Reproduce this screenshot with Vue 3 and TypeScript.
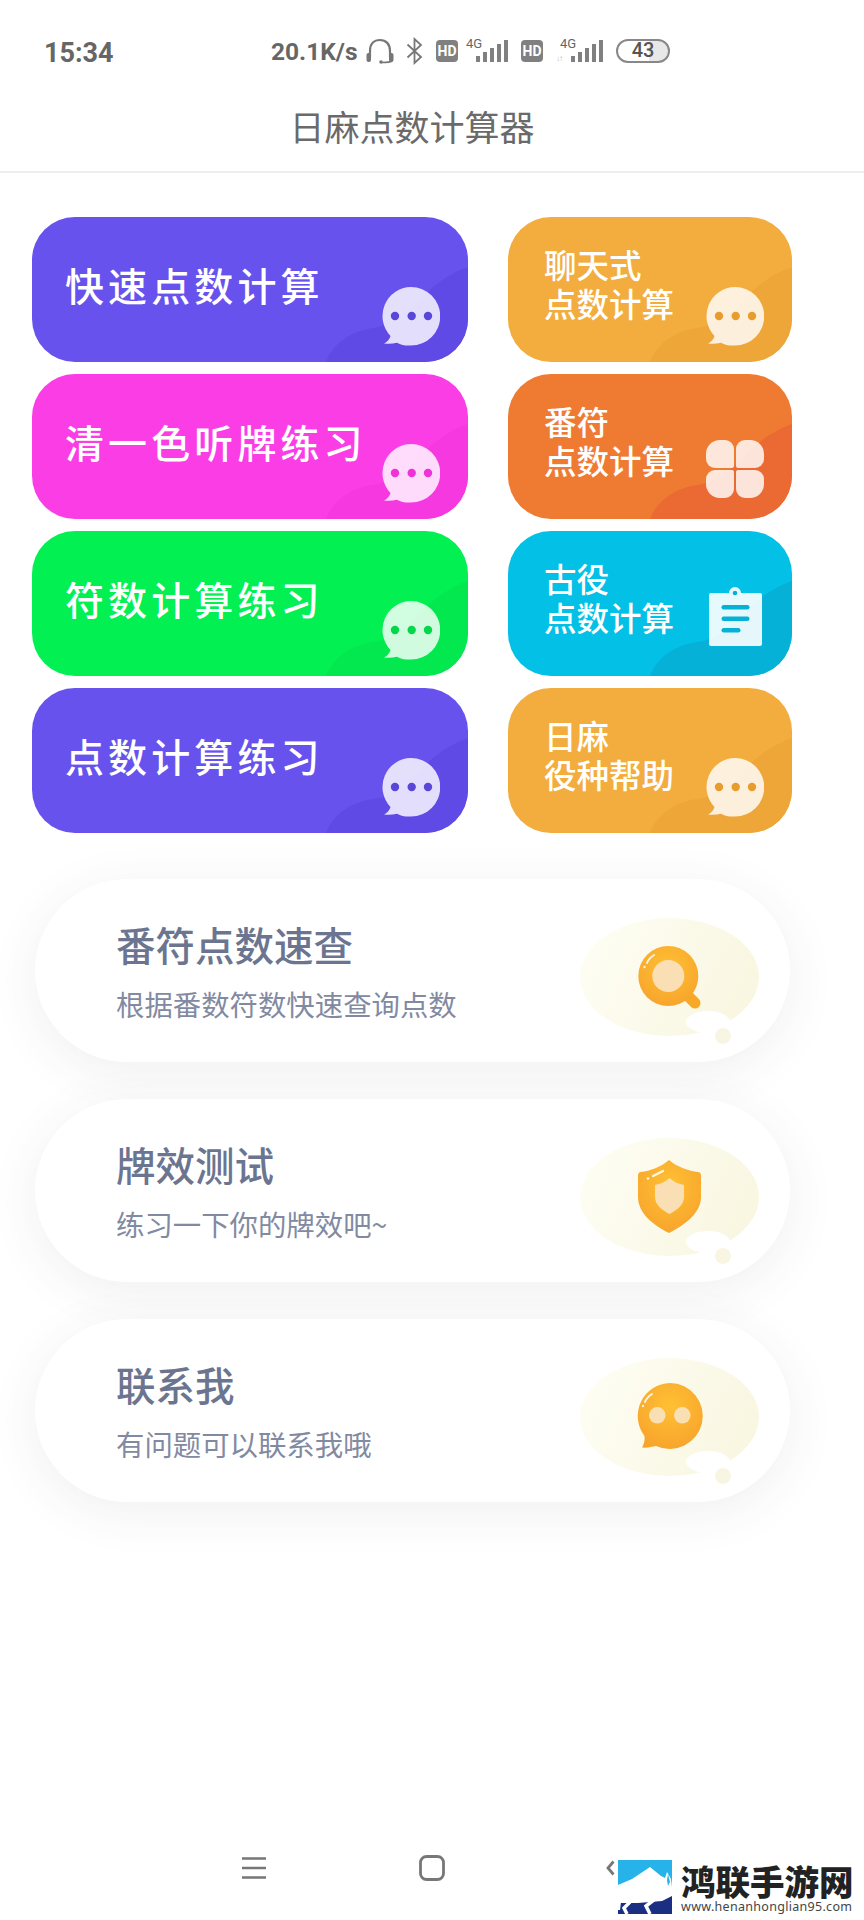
<script setup lang="ts">
type Icon = 'bubble' | 'clover' | 'clip'
interface Tile { lines: string[]; tone: string; icon: Icon }
interface Row { tile: Tile; side: Tile }
const rows: Row[] = [
  { tile: { lines: ['快速点数计算'], tone: 'purple', icon: 'bubble' }, side: { lines: ['聊天式', '点数计算'], tone: 'amber', icon: 'bubble' } },
  { tile: { lines: ['清一色听牌练习'], tone: 'magenta', icon: 'bubble' }, side: { lines: ['番符', '点数计算'], tone: 'orange', icon: 'clover' } },
  { tile: { lines: ['符数计算练习'], tone: 'green', icon: 'bubble' }, side: { lines: ['古役', '点数计算'], tone: 'cyan', icon: 'clip' } },
  { tile: { lines: ['点数计算练习'], tone: 'purple', icon: 'bubble' }, side: { lines: ['日麻', '役种帮助'], tone: 'amber', icon: 'bubble' } },
]
const tiles: Tile[] = rows.flatMap((r) => [r.tile, r.side])
const cards = [
  { title: '番符点数速查', sub: '根据番数符数快速查询点数', art: 'search' },
  { title: '牌效测试', sub: '练习一下你的牌效吧~', art: 'shield' },
  { title: '联系我', sub: '有问题可以联系我哦', art: 'chat' },
]
const barHeights = [6, 10, 14, 18, 22]
const petal = 'M14 0H19a9 9 0 0 1 9 9V26a2 2 0 0 1-2 2H9a9 9 0 0 1-9-9V14A14 14 0 0 1 14 0Z'
</script>

<template>
  <div class="page">
    <div class="status">
      <span class="time">15:34</span>
      <div class="status-right">
        <span class="speed">20.1K/s</span>
        <svg class="ic-head" width="28" height="26" viewBox="0 0 28 26" fill="none">
          <path d="M4 19V13C4 6 8 2 14 2s10 4 10 11v6" stroke="#777" stroke-width="2.2" />
          <rect x="0.5" y="15" width="4.5" height="9" rx="2" fill="#777" />
          <rect x="23" y="15" width="4.5" height="9" rx="2" fill="#777" />
          <path d="M26 23c-2 1.500-6 1.500-10 1.500" stroke="#777" stroke-width="1.600" />
          <circle cx="15" cy="24" r="1.800" fill="#777" />
        </svg>
        <svg class="ic-bt" width="17" height="28" viewBox="0 0 17 28" fill="none">
          <path d="M1.500 7.500L15 20 8.500 26V2l6.500 6L1.500 20.500" stroke="#777" stroke-width="1.800" />
        </svg>
        <span class="hd">HD</span>
        <div class="net">
          <span class="net-tag">4G</span>
          <div class="bars">
            <i v-for="h in barHeights" :key="h" class="bar" :style="{ height: h + 'px' }"></i>
          </div>
        </div>
        <span class="hd">HD</span>
        <div class="net net-2">
          <span class="net-tag">4G</span>
          <span class="arrows">↓↑</span>
          <div class="bars">
            <i v-for="h in barHeights" :key="h" class="bar" :style="{ height: h + 'px' }"></i>
          </div>
        </div>
        <div class="battery"><span class="level">43</span></div>
      </div>
    </div>

    <header class="head">日麻点数计算器</header>

    <section class="tiles">
      <div
        v-for="(t, i) in tiles"
        :key="i"
        class="tile"
        :class="[t.tone, i % 2 === 0 ? 'wide' : 'narrow']"
      >
        <svg class="wave" width="142" height="145" viewBox="0 0 142 145">
          <path d="M0 145C6 128 24 114 47 111C78 107 92 82 107 70C118 61 130 54 142 50V145Z" />
        </svg>
        <div class="label">
          <span v-for="l in t.lines" :key="l" class="line">{{ l }}</span>
        </div>
        <svg v-if="t.icon === 'bubble'" class="glyph" width="58" height="59" viewBox="0 0 58 59">
          <path class="glyph-fill" d="M29 0a29 29 0 0 1 0 58.500c-5 .3-10-.3-14-2.800-4 1-8 1.300-13 .8 3-1.500 5.500-4 6.500-7.500A29 29 0 0 1 29 0Z" />
          <circle class="glyph-dot" cx="13" cy="29" r="4.200" />
          <circle class="glyph-dot" cx="29.700" cy="29" r="4.200" />
          <circle class="glyph-dot" cx="46" cy="29" r="4.200" />
        </svg>
        <svg v-else-if="t.icon === 'clover'" class="glyph glyph-clover" width="58" height="58" viewBox="0 0 58 58">
          <path class="glyph-fill" :d="petal" />
          <path class="glyph-fill" transform="translate(58 0) scale(-1 1)" :d="petal" />
          <path class="glyph-fill" transform="translate(0 58) scale(1 -1)" :d="petal" />
          <path class="glyph-fill" transform="translate(58 58) scale(-1 -1)" :d="petal" />
        </svg>
        <svg v-else class="glyph glyph-clip" width="58" height="59" viewBox="0 0 58 59">
          <path class="glyph-solid" d="M5 6h18a6 6 0 0 1 12 0H54a2 2 0 0 1 2 2v49a2 2 0 0 1-2 2H5a2 2 0 0 1-2-2V8a2 2 0 0 1 2-2Z" />
          <circle class="glyph-dot" cx="29" cy="6" r="2.300" />
          <rect class="glyph-dot" x="15.500" y="18" width="28" height="4.400" rx="2.200" />
          <rect class="glyph-dot" x="15.500" y="29.500" width="28" height="4.400" rx="2.200" />
          <rect class="glyph-dot" x="15.500" y="41" width="19" height="4.400" rx="2.200" />
        </svg>
      </div>
    </section>

    <section class="cards">
      <article v-for="c in cards" :key="c.art" class="card">
        <div class="card-text">
          <h2 class="card-title">{{ c.title }}</h2>
          <p class="card-sub">{{ c.sub }}</p>
        </div>
        <svg class="art" width="190" height="135" viewBox="0 0 190 135">
          <defs>
            <linearGradient :id="'egg-' + c.art" x1="0" y1="0" x2="1" y2="0.300">
              <stop offset="0" stop-color="#fefef5" />
              <stop offset="1" stop-color="#f9f7e2" />
            </linearGradient>
            <radialGradient :id="'gold-' + c.art" cx="0.500" cy="0.350" r="0.700">
              <stop offset="0" stop-color="#ffc034" />
              <stop offset="1" stop-color="#f7a32c" />
            </radialGradient>
          </defs>
          <ellipse cx="94.500" cy="62" rx="89.500" ry="59" :fill="'url(#egg-' + c.art + ')'" />
          <ellipse cx="133" cy="107" rx="22" ry="11" fill="#fff" />
          <circle cx="148" cy="121" r="14" fill="#fff" />
          <circle cx="148" cy="121" r="8" fill="#f8f6e2" />
          <template v-if="c.art === 'search'">
            <path d="M112 80l8 8" stroke="#f8a827" stroke-width="11" stroke-linecap="round" fill="none" />
            <circle cx="93.300" cy="61" r="30" :fill="'url(#gold-' + c.art + ')'" />
            <circle cx="93.300" cy="61" r="16" fill="#fbdfb4" />
            <path d="M72 48c1-3 4-6 7-8" stroke="#fff" stroke-width="2" stroke-linecap="round" fill="none" opacity=".85" />
            <circle cx="69.500" cy="52" r="1.200" fill="#fff" opacity=".85" />
          </template>
          <template v-else-if="c.art === 'shield'">
            <path d="M94 25C102 32 114 36 123 37Q126 37 126 41V62C126 78 110 90 94 98C78 90 63 78 63 62V41Q63 37 66 37C75 36 86 32 94 25Z" :fill="'url(#gold-' + c.art + ')'" />
            <path d="M94.500 43C99 47 104 49 109 50V62C109 70 102 75 94.500 79C87 75 80 70 80 62V50C85 49 90 47 94.500 43Z" fill="#fbdfb4" />
            <path d="M78 41l10-5" stroke="#fff" stroke-width="2.400" stroke-linecap="round" opacity=".85" />
            <circle cx="73" cy="43.500" r="1.300" fill="#fff" opacity=".85" />
          </template>
          <template v-else>
            <path d="M95 28a33 33 0 1 1-14 63c-4 1-9 2-14 1.500 2-3 3-7 2.500-11.500A33 33 0 0 1 95 28Z" :fill="'url(#gold-' + c.art + ')'" />
            <circle cx="82.300" cy="60.300" r="8.300" fill="#fbdfb4" />
            <circle cx="107.300" cy="60.300" r="8.300" fill="#fbdfb4" />
            <path d="M70 47c1-3 4-6 7-8" stroke="#fff" stroke-width="2" stroke-linecap="round" fill="none" opacity=".85" />
            <circle cx="68" cy="51" r="1.200" fill="#fff" opacity=".85" />
          </template>
        </svg>
      </article>
    </section>

    <nav class="nav">
      <div class="nav-slot">
        <svg width="26" height="24" viewBox="0 0 26 24" fill="none">
          <path d="M1 2.500h24M1 12h24M1 21.500h24" stroke="#777" stroke-width="2.400" />
        </svg>
      </div>
      <div class="nav-slot">
        <svg width="26" height="26" viewBox="0 0 26 26" fill="none">
          <rect x="1.500" y="1.500" width="23" height="23" rx="6" stroke="#777" stroke-width="2.800" />
        </svg>
      </div>
      <div class="nav-slot">
        <svg width="9" height="16" viewBox="0 0 9 16" fill="none">
          <path d="M7.500 1.500L2 8l5.500 6.500" stroke="#777" stroke-width="2.800" />
        </svg>
      </div>
    </nav>

    <div class="mark">
      <svg class="mark-logo" width="54" height="54" viewBox="0 0 54 54">
        <rect width="54" height="54" fill="#27b3ea" />
        <path d="M0 25L14 19L32 7L43 16L47 18L49 12L53 19L54 27V44H0Z" fill="#fff" />
        <path d="M50 14l2 8-2 4-1-6Z" fill="#27b3ea" />
        <path d="M0 54V43H20L44 41L54 36V54Z" fill="#1b2f82" />
        <path d="M12 42L6 48L9 54M37 39L28 46L32 54" stroke="#fff" stroke-width="3.500" fill="none" />
        <path d="M0 38H18L21 42H3L2 50H0Z" fill="#fff" />
      </svg>
      <div class="mark-text">
        <span class="mark-name">鸿联手游网</span>
        <span class="mark-url">www.henanhonglian95.com</span>
      </div>
    </div>
  </div>
</template>

<style>
html, body { background: #fff; }
</style>

<style scoped>
.page {
  position: relative;
  display: flex;
  flex-direction: column;
  width: 864px;
  height: 1920px;
  overflow: hidden;
  background: #fff;
  font-family: "Noto Sans CJK SC", "Noto Sans", sans-serif;
}

/* status bar */
.status {
  display: flex;
  align-items: center;
  height: 26px;
  padding: 38px 0 20px 44px;
  color: #666;
  font-family: Roboto, "Liberation Sans", sans-serif;
}
.time { width: 227px; margin-top: 3px; font-size: 27px; font-weight: 700; line-height: 26px; }
.status-right { display: flex; align-items: center; height: 26px; }
.speed { width: 95px; margin-top: 1px; font-size: 24.500px; font-weight: 700; line-height: 26px; }
.ic-bt { margin-left: 12px; }
.hd {
  width: 22px;
  height: 22px;
  margin-left: 13px;
  border-radius: 4px;
  background: #808080;
  color: #fff;
  font-size: 14px;
  font-weight: 700;
  line-height: 22px;
  text-align: center;
}
.net { position: relative; width: 42px; height: 24px; margin-left: 8px; }
.net-2 { width: 43px; margin-left: 17px; }
.net-tag { position: absolute; top: -1px; left: 0; font-size: 13px; line-height: 12px; }
.arrows { position: absolute; left: -4px; bottom: 0; font-size: 8px; line-height: 9px; color: #bbb; letter-spacing: -1px; }
.bars { position: absolute; right: 0; bottom: 1px; display: flex; align-items: flex-end; gap: 3px; }
.bar { display: block; width: 4px; background: #808080; }
.battery {
  box-sizing: border-box;
  width: 54px;
  height: 24px;
  margin-left: 13px;
  border: 2.5px solid #888;
  border-radius: 12px;
  background: linear-gradient(90deg, #fff 62%, #e8e8e8 62%);
  text-align: center;
}
.level { font-size: 20px; font-weight: 500; line-height: 19px; display: block; color: #555; }

/* title */
.head {
  height: 87px;
  padding-right: 40px;
  border-bottom: 2px solid #eeeeee;
  color: #6a6a6a;
  font-size: 35px;
  line-height: 83px;
  text-align: center;
}

/* tiles */
.tiles {
  display: grid;
  grid-template-columns: 436px 284px;
  grid-auto-rows: 145px;
  column-gap: 40px;
  row-gap: 12px;
  margin: 44px 0 0 32px;
}
.tile {
  position: relative;
  display: flex;
  align-items: center;
  overflow: hidden;
  border-radius: 43px;
  color: #fff;
  background: var(--base);
}
.purple { --base: #6852ee; --deep: #5f4ae6; --dot: #5a46d8; }
.magenta { --base: #fb3de6; --deep: #f638e1; --dot: #f030d8; }
.green { --base: #03f053; --deep: #03e84f; --dot: #03d84a; }
.amber { --base: #f2ad3e; --deep: #eda637; --dot: #e89c2e; }
.orange { --base: #ef7b32; --deep: #eb6a33; --dot: #eb6a33; }
.cyan { --base: #03c0e6; --deep: #05b1d6; --dot: #05b1d6; }
.wave { position: absolute; right: 0; bottom: 0; }
.wave path { fill: var(--deep); }
.label { position: relative; display: flex; flex-direction: column; }
.wide .label { margin-top: -12px; padding-left: 33px; font-size: 39px; font-weight: 500; letter-spacing: 4.100px; line-height: 50px; }
.narrow .label { margin-top: -14px; padding-left: 36px; font-size: 32.500px; font-weight: 500; line-height: 39px; }
.line { display: block; white-space: nowrap; }
.glyph { position: absolute; bottom: 16px; right: 28px; }
.glyph-clover { bottom: 21px; }
.glyph-clip { bottom: 30px; }
.glyph-fill { fill: #fff; fill-opacity: 0.82; }
.glyph-solid { fill: #fff; fill-opacity: 0.9; }
.glyph-dot { fill: var(--dot); }

/* cards */
.cards { display: flex; flex-direction: column; gap: 37px; margin: 46px 0 0 35px; }
.card {
  box-sizing: border-box;
  display: flex;
  justify-content: space-between;
  width: 755px;
  height: 183px;
  padding: 34.500px 25px 10px 81px;
  border-radius: 92px;
  background: #fff;
  box-shadow: 0 10px 50px rgba(60, 60, 70, 0.08);
}
.card-text { display: flex; flex-direction: column; }
.card-title { margin: 0; color: #6c7590; font-size: 39.500px; font-weight: 500; line-height: 60px; }
.card-sub { margin: 8.500px 0 0; color: #828aa2; font-size: 28.400px; font-weight: 400; line-height: 44px; }
.art { flex: none; margin-top: 1.500px; }

/* nav */
.nav {
  display: flex;
  justify-content: center;
  align-items: center;
  height: 104px;
  margin-top: auto;
}
.nav-slot { display: flex; justify-content: center; width: 178px; }

/* watermark */
.mark {
  position: absolute;
  right: 13px;
  bottom: 6px;
  display: flex;
  gap: 9px;
  align-items: flex-start;
  background: #fff;
}
.mark-logo { flex: none; }
.mark-text { display: flex; flex-direction: column; width: 170px; }
.mark-name { color: #222; font-size: 34.500px; font-weight: 900; line-height: 40px; white-space: nowrap; }
.mark-url { color: #444; font-family: "Noto Sans", sans-serif; font-size: 12.500px; letter-spacing: 0.300px; line-height: 14px; white-space: nowrap; }
</style>
